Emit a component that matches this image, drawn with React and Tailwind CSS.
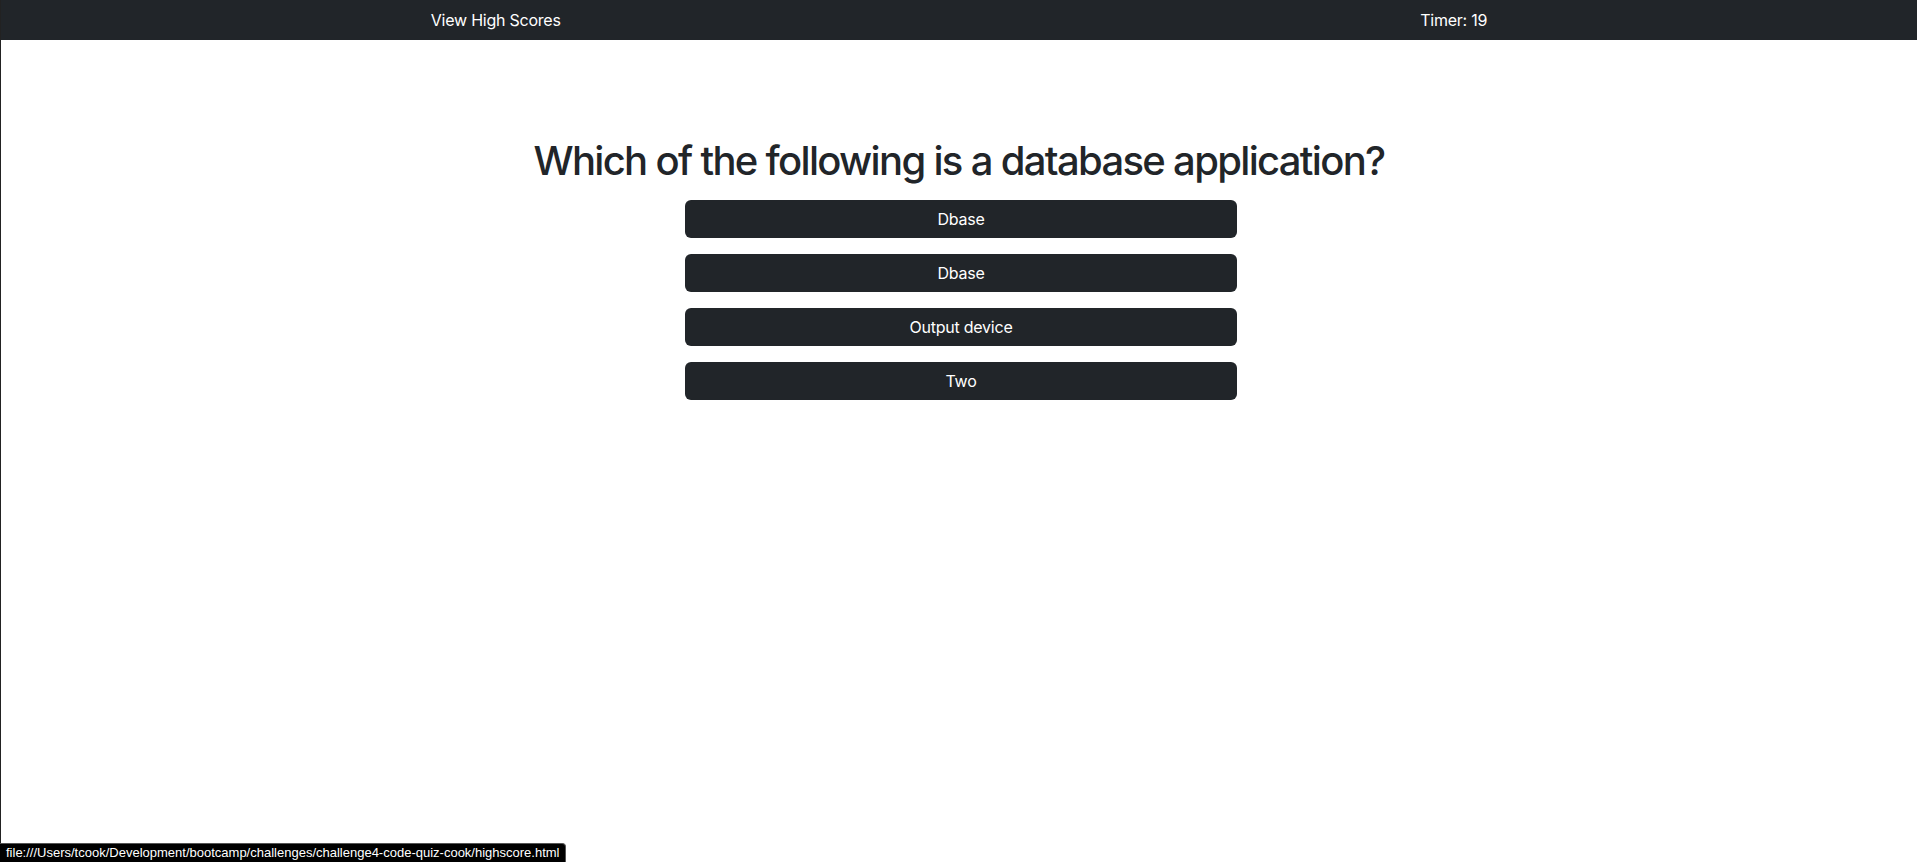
import { useState } from 'react'

const question = {
  title: 'Which of the following is a database application?',
  choices: ['Dbase', 'Dbase', 'Output device', 'Two'],
}

export default function App() {
  const [timer] = useState(19)

  return (
    <div className="relative min-h-[862px] bg-white border-l border-[#222] font-['Inter','Liberation_Sans',sans-serif] text-[#212529]">
      <nav className="h-10 bg-[#212529] flex items-center justify-around text-white text-base tracking-[-0.015em]">
        <a href="#" className="leading-6">View High Scores</a>
        <span className="leading-6">Timer: {timer}</span>
      </nav>

      <main className="flex flex-col items-center pt-[97px]">
        <h1 className="text-[40px] leading-[48px] font-medium tracking-[-0.042em]">{question.title}</h1>
        <div className="mt-[15px] flex flex-col gap-4 w-[552px] ml-1">
          {question.choices.map((c, i) => (
            <button key={i} className="h-[38px] w-full rounded-md bg-[#212529] text-white text-base leading-6 tracking-[-0.015em]">
              {c}
            </button>
          ))}
        </div>
      </main>

      <div className="fixed left-0 bottom-0 h-[19px] pl-[6px] pr-[5px] flex items-center bg-black text-white text-[13px] rounded-tr-[4px] border-t border-r border-[#555] font-['Liberation_Sans',sans-serif]">
        file:///Users/tcook/Development/bootcamp/challenges/challenge4-code-quiz-cook/highscore.html
      </div>
    </div>
  )
}
